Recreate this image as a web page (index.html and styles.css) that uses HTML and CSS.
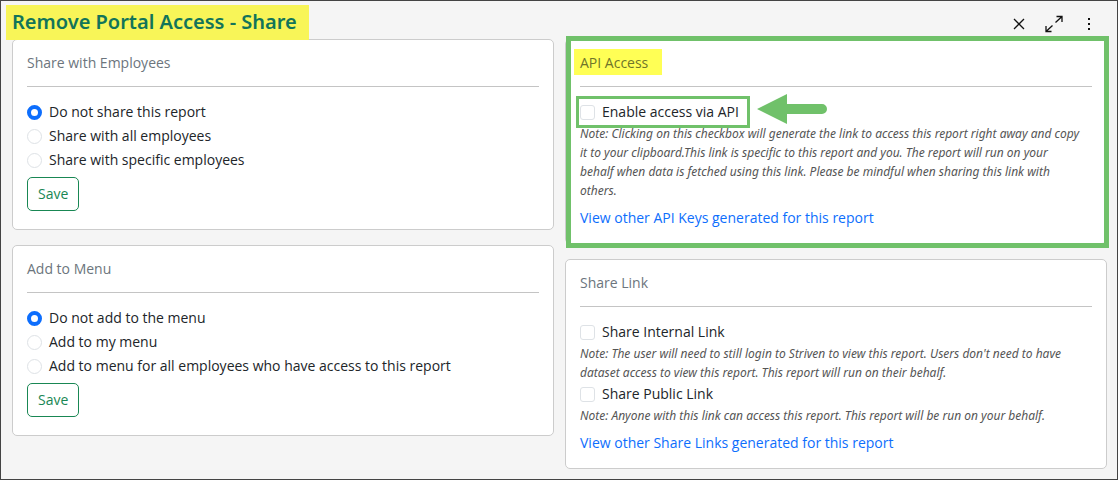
FILE: index.html
```
<!DOCTYPE html>
<html lang="en">
<head>
  <meta charset="UTF-8">
  <meta name="viewport" content="width=device-width, initial-scale=1.0">
  <title>Remove Portal Access - Share</title>
  <link rel="stylesheet" href="styles.css">
</head>
<body>

  <header class="page-header">
    <h1>Remove Portal Access - Share</h1>
    <div class="tools">
      <button type="button" class="icon-btn" aria-label="Close">
        <svg width="18" height="18" viewBox="0 0 18 18"><path d="M4 4l10 10M14 4L4 14"/></svg>
      </button>
      <button type="button" class="icon-btn" aria-label="Expand">
        <svg width="18" height="18" viewBox="0 0 18 18"><path d="M10.500 7.500L17 1.500M11.500 1.500H17V7M7.500 10.500L1 16.500M1 11v5.500h5.500"/></svg>
      </button>
      <button type="button" class="icon-btn" aria-label="More">
        <svg width="18" height="18" viewBox="0 0 18 18"><path class="dots" d="M8 3h2v2H8zM8 8h2v2H8zM8 13h2v2H8z"/></svg>
      </button>
    </div>
  </header>

  <main class="columns">
    <div class="column">
      <form class="card">
        <h2>Share with Employees</h2>
        <label class="option"><input type="radio" name="share" checked>Do not share this report</label>
        <label class="option"><input type="radio" name="share">Share with all employees</label>
        <label class="option"><input type="radio" name="share">Share with specific employees</label>
        <button type="button" class="save">Save</button>
      </form>

      <form class="card">
        <h2>Add to Menu</h2>
        <label class="option"><input type="radio" name="menu" checked>Do not add to the menu</label>
        <label class="option"><input type="radio" name="menu">Add to my menu</label>
        <label class="option"><input type="radio" name="menu">Add to menu for all employees who have access to this report</label>
        <button type="button" class="save">Save</button>
      </form>
    </div>

    <div class="column">
      <section class="card framed">
        <h2><span class="marked">API Access</span></h2>
        <label class="option boxed">
          <input type="checkbox">Enable access via API
          <svg class="arrow" width="70" height="30" viewBox="0 0 70 30"><path d="M0 15L30 0v10h35a5 5 0 0 1 0 10H30v10z"/></svg>
        </label>
        <p class="note">Note: Clicking on this checkbox will generate the link to access this report right away and copy it to your clipboard.This link is specific to this report and you. The report will run on your behalf when data is fetched using this link. Please be mindful when sharing this link with others.</p>
        <a href="#" class="more">View other API Keys generated for this report</a>
      </section>

      <section class="card">
        <h2>Share Link</h2>
        <label class="option"><input type="checkbox">Share Internal Link</label>
        <p class="note">Note: The user will need to still login to Striven to view this report. Users don't need to have dataset access to view this report. This report will run on their behalf.</p>
        <label class="option"><input type="checkbox">Share Public Link</label>
        <p class="note">Note: Anyone with this link can access this report. This report will be run on your behalf.</p>
        <a href="#" class="more">View other Share Links generated for this report</a>
      </section>
    </div>
  </main>

</body>
</html>
```
FILE: styles.css
```
* {
  box-sizing: border-box;
}

body {
  margin: 0;
  min-height: 100vh;
  padding: 0 10px 10px 11px;
  border: 1px solid #444;
  background-color: #f5f5f5;
  color: #212529;
  font-family: "Open Sans", "Noto Sans", sans-serif;
  font-size: 14px;
  line-height: 20px;
}

.page-header {
  display: flex;
  justify-content: space-between;
  align-items: center;
  height: 38px;
  padding-top: 4px;
}

h1 {
  position: relative;
  z-index: 1;
  margin: 0 0 0 -6px;
  padding: 0 12px 1px 6px;
  background-color: #f8f558;
  color: #12745a;
  font-family: "Noto Sans", sans-serif;
  font-size: 20px;
  font-weight: 600;
  line-height: 34px;
}

.tools {
  display: flex;
  gap: 11px;
  padding: 4px 6px 0 0;
}

.icon-btn {
  display: flex;
  align-items: center;
  justify-content: center;
  width: 24px;
  height: 24px;
  padding: 0;
  border: none;
  background: none;
  cursor: pointer;
}

.icon-btn svg {
  fill: none;
  stroke: #111;
  stroke-width: 1.3;
}

.icon-btn .dots {
  fill: #111;
  stroke: none;
}

.columns {
  display: grid;
  grid-template-columns: 1fr 1fr;
  align-items: start;
  gap: 11px;
}

.column {
  display: flex;
  flex-direction: column;
  gap: 15px;
}

.card {
  position: relative;
  padding: 13px 14px 15px;
  border: 1px solid #ccc;
  border-radius: 5px;
  background-color: #fff;
}

h2 {
  margin: 0 0 13px;
  padding-bottom: 13px;
  border-bottom: 1px solid #c4c4c4;
  color: #6c757d;
  font-size: 14px;
  font-weight: 400;
}

.option {
  display: flex;
  align-items: center;
  gap: 7px;
  height: 24px;
}

input {
  appearance: none;
  flex: none;
  width: 15px;
  height: 15px;
  margin: 0;
  border: 1px solid #dee2e6;
  border-radius: 3px;
  background-color: #fff;
}

input[type="radio"] {
  border-radius: 50%;
}

input:checked {
  border: 4px solid #0d6efd;
}

.save {
  display: block;
  height: 34px;
  margin: 5px 0 3px;
  padding: 0 10px;
  border: 1px solid #198754;
  border-radius: 5px;
  background-color: #fff;
  color: #198754;
  font: inherit;
  cursor: pointer;
}

.note {
  margin: 0;
  padding-right: 8px;
  color: #555;
  font-family: "Noto Sans", sans-serif;
  font-size: 12px;
  font-style: italic;
  line-height: 19px;
}

.more {
  display: block;
  width: fit-content;
  margin-top: 8px;
  color: #0d6efd;
  text-decoration: none;
}

/* green frame and yellow marker on the API card */
.framed::after {
  content: "";
  position: absolute;
  inset: -4px -3px -5px 0;
  border: 5px solid #70c16a;
  pointer-events: none;
}

.marked {
  margin-left: -6px;
  padding: 4px 14px 3px 6px;
  background-color: #ffff55;
  color: #6f752a;
}

.boxed {
  position: relative;
  width: fit-content;
}

.boxed::before {
  content: "";
  position: absolute;
  inset: -4px -11px -4px -4px;
  border: 3px solid #70c16a;
}

.arrow {
  position: absolute;
  top: -6px;
  left: calc(100% + 18px);
  fill: #70c16a;
}
```
